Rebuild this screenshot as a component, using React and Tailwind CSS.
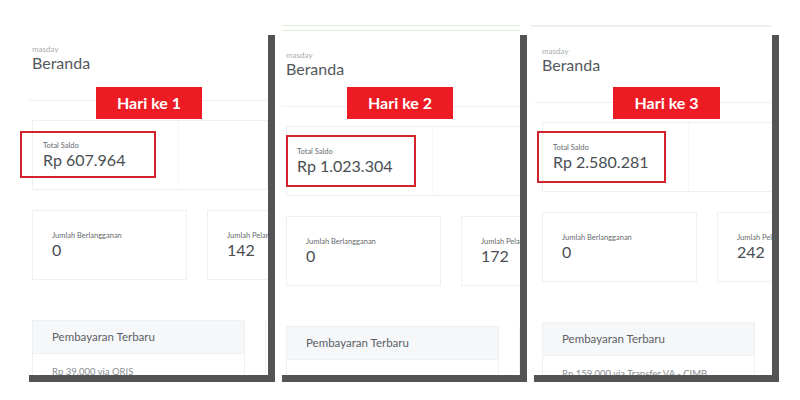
const panels = [
  {
    id: 1,
    width: 'w-[246px]',
    pad: 'pt-[9px]',
    px: 'px-[3px]',
    saldo: 'Rp 607.964',
    pelanggan: '142',
    bayar: 'Rp 39.000 via QRIS',
    topline: null,
    tag: 'left-[67px] w-[106px]',
    box: 'left-[-9px] top-[106px] w-[136px] h-[47px]'
  },
  {
    id: 2,
    width: 'w-[245px]',
    pad: 'pt-[15px]',
    px: 'px-[4px]',
    saldo: 'Rp 1.023.304',
    pelanggan: '172',
    bayar: null,
    topline: 'green',
    tag: 'left-[65px] w-[106px]',
    box: 'left-[4px] top-[110px] w-[130px] h-[52px]'
  },
  {
    id: 3,
    width: 'w-[245px]',
    pad: 'pt-[11px]',
    px: 'px-[8px]',
    saldo: 'Rp 2.580.281',
    pelanggan: '242',
    bayar: 'Rp 159.000 via Transfer VA - CIMB',
    topline: 'plain',
    tag: 'left-[79px] w-[107px]',
    box: 'left-[3px] top-[106px] w-[129px] h-[52px]'
  }
]

function Panel({ p }) {
  return (
    <div className={`relative flex flex-col shrink-0 ${p.width}`}>
      {/* strip above the frame */}
      <div className="h-[10px] pr-[7px]">
        {p.topline === 'green' && (
          <div className="h-[6px] border-t border-b border-[#e2ecda]" />
        )}
        {p.topline === 'plain' && (
          <div className="-ml-[3px] h-[2px] bg-[#f0f0ea]" />
        )}
      </div>

      {/* screenshot frame */}
      <div className="h-[347px] border-r-[7px] border-b-[7px] border-[#545457] bg-white overflow-hidden">
        <div className={`${p.pad} pb-[28px] ${p.px} border-b border-[#f0f1f3]`}>
          <div className="text-[8px] leading-[10px] text-[#a8acb0]">masday</div>
          <div className="text-[16px] leading-[18px] text-[#53585d]">Beranda</div>
        </div>

        <div className={`${p.px} pt-[19px]`}>
          {/* saldo */}
          <div className="flex w-[236px] h-[70px] border border-[#eff0f2]">
            <div className="w-[146px] border-r border-[#f6f7f8] pl-[10px] pt-[20px]">
              <div className="text-[7.5px] leading-[10px] text-[#676c70]">Total Saldo</div>
              <div className="text-[16px] leading-[18px] text-[#4a4e52] whitespace-nowrap">{p.saldo}</div>
            </div>
            <div className="flex-1" />
          </div>

          {/* stats */}
          <div className="flex gap-[20px] mt-[20px]">
            {[
              ['Jumlah Berlangganan', '0'],
              ['Jumlah Pelanggan', p.pelanggan]
            ].map(([label, value]) => (
              <div key={label} className="shrink-0 w-[155px] h-[70px] border border-[#eff0f2] pl-[19px] pt-[20px]">
                <div className="text-[7.5px] leading-[10px] text-[#676c70] whitespace-nowrap">{label}</div>
                <div className="text-[16px] leading-[18px] text-[#4a4e52]">{value}</div>
              </div>
            ))}
          </div>

          {/* pembayaran */}
          <div className="flex gap-[20px] mt-[40px]">
            <div className="shrink-0 w-[213px] h-[80px] border border-[#eff0f2]">
              <div className="h-[33px] bg-[#f6f7f9] border-b border-[#eff0f2] pl-[19px] flex items-center">
                <span className="text-[11.5px] text-[#5c6166]">Pembayaran Terbaru</span>
              </div>
              {p.bayar && (
                <div className="pl-[19px] pt-[12px] text-[9.5px] leading-[12px] text-[#8a8f94] whitespace-nowrap">
                  {p.bayar}
                </div>
              )}
            </div>
            <div className="shrink-0 w-[213px] h-[80px] border border-[#f2f3f5]" />
          </div>
        </div>
      </div>

      {/* annotations */}
      <div className={`absolute top-[62px] h-[32px] bg-[#ed1c24] flex items-center justify-center ${p.tag}`}>
        <span className="text-white font-bold text-[16px] leading-none">Hari ke {p.id}</span>
      </div>
      <div className={`absolute border-2 border-[#d0232b] ${p.box}`} />
    </div>
  )
}

export default function App() {
  return (
    <div className="w-[800px] h-[400px] bg-white overflow-hidden flex gap-[7px] pl-[29px] pt-[25px] font-['Lato',sans-serif]">
      {panels.map(p => (
        <Panel key={p.id} p={p} />
      ))}
    </div>
  )
}
